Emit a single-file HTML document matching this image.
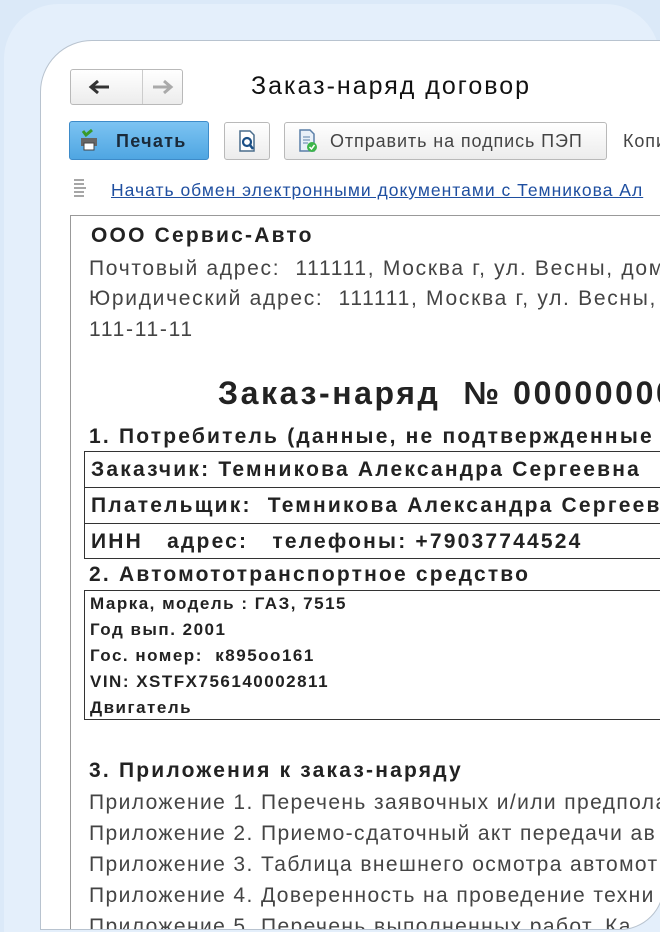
<!DOCTYPE html>
<html style="width:660px;height:932px;overflow:hidden"><head><meta charset="utf-8"><style>
*{margin:0;padding:0;box-sizing:border-box}
body{width:660px;height:932px;overflow:hidden;background:#dbe9f8;font-family:"Liberation Sans",sans-serif;position:relative}
.bg2{position:absolute;left:4px;top:4px;width:656px;height:928px;background:#e4effb;border-radius:55px 55px 0 0}
.card{position:absolute;left:40px;top:40px;width:624px;height:890px;background:#fff;border:1px solid #b8c3cf;border-radius:52px 0 44px 0;overflow:hidden}
.a{position:absolute;white-space:pre}
.i{position:absolute;line-height:0}
.btn{position:absolute;border:1px solid #b9b9b9;border-radius:3px;background:linear-gradient(#fff,#ececec)}
.t{font-size:21px;color:#444;letter-spacing:1.7px}
.ap{letter-spacing:1.4px}
.b{font-weight:bold;color:#222;letter-spacing:2.2px}
.box{position:absolute;border:1px solid #333}
.s{font-size:17px;font-weight:bold;color:#222;letter-spacing:1.5px}
</style></head><body>
<div class="bg2"></div>
<div class="card">
 <div class="btn" style="left:29px;top:28px;width:113px;height:36px"></div>
 <div class="a" style="left:101px;top:29px;width:1px;height:34px;background:#ccc"></div>
 <div class="i" style="left:46px;top:37px"><svg width="24" height="18"><path d="M22 9H5M11 3L4 9l7 6" stroke="#333" stroke-width="3" fill="none"/></svg></div>
 <div class="i" style="left:110px;top:37px"><svg width="24" height="18"><path d="M2 9h17M13 3l7 6-7 6" stroke="#aaa" stroke-width="3" fill="none"/></svg></div>
 <div class="a" style="left:210px;top:31px;font-size:25px;color:#111;letter-spacing:2px">Заказ-наряд договор</div>
 <div class="a" style="left:28px;top:80px;width:140px;height:39px;border:1px solid #3d8bc9;border-radius:3px;background:linear-gradient(#7cc3f2,#4fa6e2)"></div>
 <div class="i" style="left:38px;top:88px"><svg width="20" height="22"><path d="M4 2l3 4 6-5" stroke="#3a9a2a" stroke-width="3" fill="none"/><rect x="2" y="9" width="16" height="8" fill="#666"/><rect x="5" y="14" width="10" height="7" fill="#fff" stroke="#444"/></svg></div>
 <div class="a" style="left:75px;top:90px;font-size:18px;font-weight:bold;color:#1a2a3a;letter-spacing:1.3px">Печать</div>
 <div class="btn" style="left:183px;top:81px;width:46px;height:38px"></div>
 <div class="i" style="left:197px;top:89px"><svg width="18" height="22"><path d="M2 1h10l4 4v16H2z" fill="#fff" stroke="#4a6d8c" stroke-width="1.5"/><circle cx="9" cy="12" r="4" stroke="#1a4f86" stroke-width="2.2" fill="none"/><path d="M12 15l3 4" stroke="#1a4f86" stroke-width="2.5"/></svg></div>
 <div class="btn" style="left:243px;top:81px;width:323px;height:38px"></div>
 <div class="i" style="left:257px;top:88px"><svg width="20" height="24"><path d="M2 1h10l4 4v17H2z" fill="#e8f0f8" stroke="#5a7fa8" stroke-width="1.5"/><path d="M5 8h7M5 11h7M5 14h5" stroke="#5a7fa8"/><circle cx="14" cy="18" r="5" fill="#3cb54a"/><path d="M11.5 18l2 2 3-4" stroke="#fff" stroke-width="1.5" fill="none"/></svg></div>
 <div class="a" style="left:289px;top:90px;font-size:18px;color:#444;letter-spacing:0.9px">Отправить на подпись ПЭП</div>
 <div class="a" style="left:582px;top:90px;font-size:18px;color:#444;letter-spacing:0.9px">Копи</div>
 <div class="i" style="left:30px;top:137px"><svg width="18" height="20"><path d="M3 2h10M3 6h10M3 10h12M3 14h10M3 18h10" stroke="#888" stroke-width="1.5"/></svg></div>
 <div class="a" style="left:70px;top:139px;font-size:17.5px;color:#1f4fa0;text-decoration:underline;letter-spacing:1px">Начать обмен электронными документами с Темникова Ал</div>
 <div class="a" style="left:29px;top:174px;width:620px;height:760px;border-left:1px solid #999;border-top:1px solid #999"></div>
 <div class="a t b" style="left:50px;top:183px">ООО Сервис-Авто</div>
 <div class="a t" style="left:48px;top:216px">Почтовый адрес:  111111, Москва г, ул. Весны, дом</div>
 <div class="a t" style="left:48px;top:246px">Юридический адрес:  111111, Москва г, ул. Весны, </div>
 <div class="a t" style="left:48px;top:277px">111-11-11</div>
 <div class="a b" style="left:177px;top:334px;font-size:32px;letter-spacing:2.6px">Заказ-наряд  № 00000000</div>
 <div class="a t b" style="left:48px;top:384px">1. Потребитель (данные, не подтвержденные</div>
 <div class="box" style="left:43px;top:410px;width:600px;height:108px"></div>
 <div class="a" style="left:43px;top:446px;width:600px;height:1px;background:#333"></div>
 <div class="a" style="left:43px;top:482px;width:600px;height:1px;background:#333"></div>
 <div class="a t b" style="left:50px;top:417px">Заказчик: Темникова Александра Сергеевна</div>
 <div class="a t b" style="left:50px;top:453px">Плательщик:  Темникова Александра Сергеевн</div>
 <div class="a t b" style="left:50px;top:489px">ИНН   адрес:   телефоны: +79037744524</div>
 <div class="a t b" style="left:48px;top:522px">2. Автомототранспортное средство</div>
 <div class="box" style="left:43px;top:549px;width:600px;height:130px"></div>
 <div class="a s" style="left:49px;top:553px">Марка, модель : ГАЗ, 7515</div>
 <div class="a s" style="left:49px;top:579px">Год вып. 2001</div>
 <div class="a s" style="left:49px;top:605px">Гос. номер:  к895оо161</div>
 <div class="a s" style="left:49px;top:631px">VIN: XSTFX756140002811</div>
 <div class="a s" style="left:49px;top:657px">Двигатель</div>
 <div class="a t b" style="left:48px;top:718px">3. Приложения к заказ-наряду</div>
 <div class="a t ap" style="left:48px;top:750px">Приложение 1. Перечень заявочных и/или предпола</div>
 <div class="a t ap" style="left:48px;top:781px">Приложение 2. Приемо-сдаточный акт передачи ав</div>
 <div class="a t ap" style="left:48px;top:812px">Приложение 3. Таблица внешнего осмотра автомот</div>
 <div class="a t ap" style="left:48px;top:843px">Приложение 4. Доверенность на проведение техни</div>
 <div class="a t ap" style="left:48px;top:874px">Приложение 5. Перечень выполненных работ. Ка</div>
</div>
</body></html>
